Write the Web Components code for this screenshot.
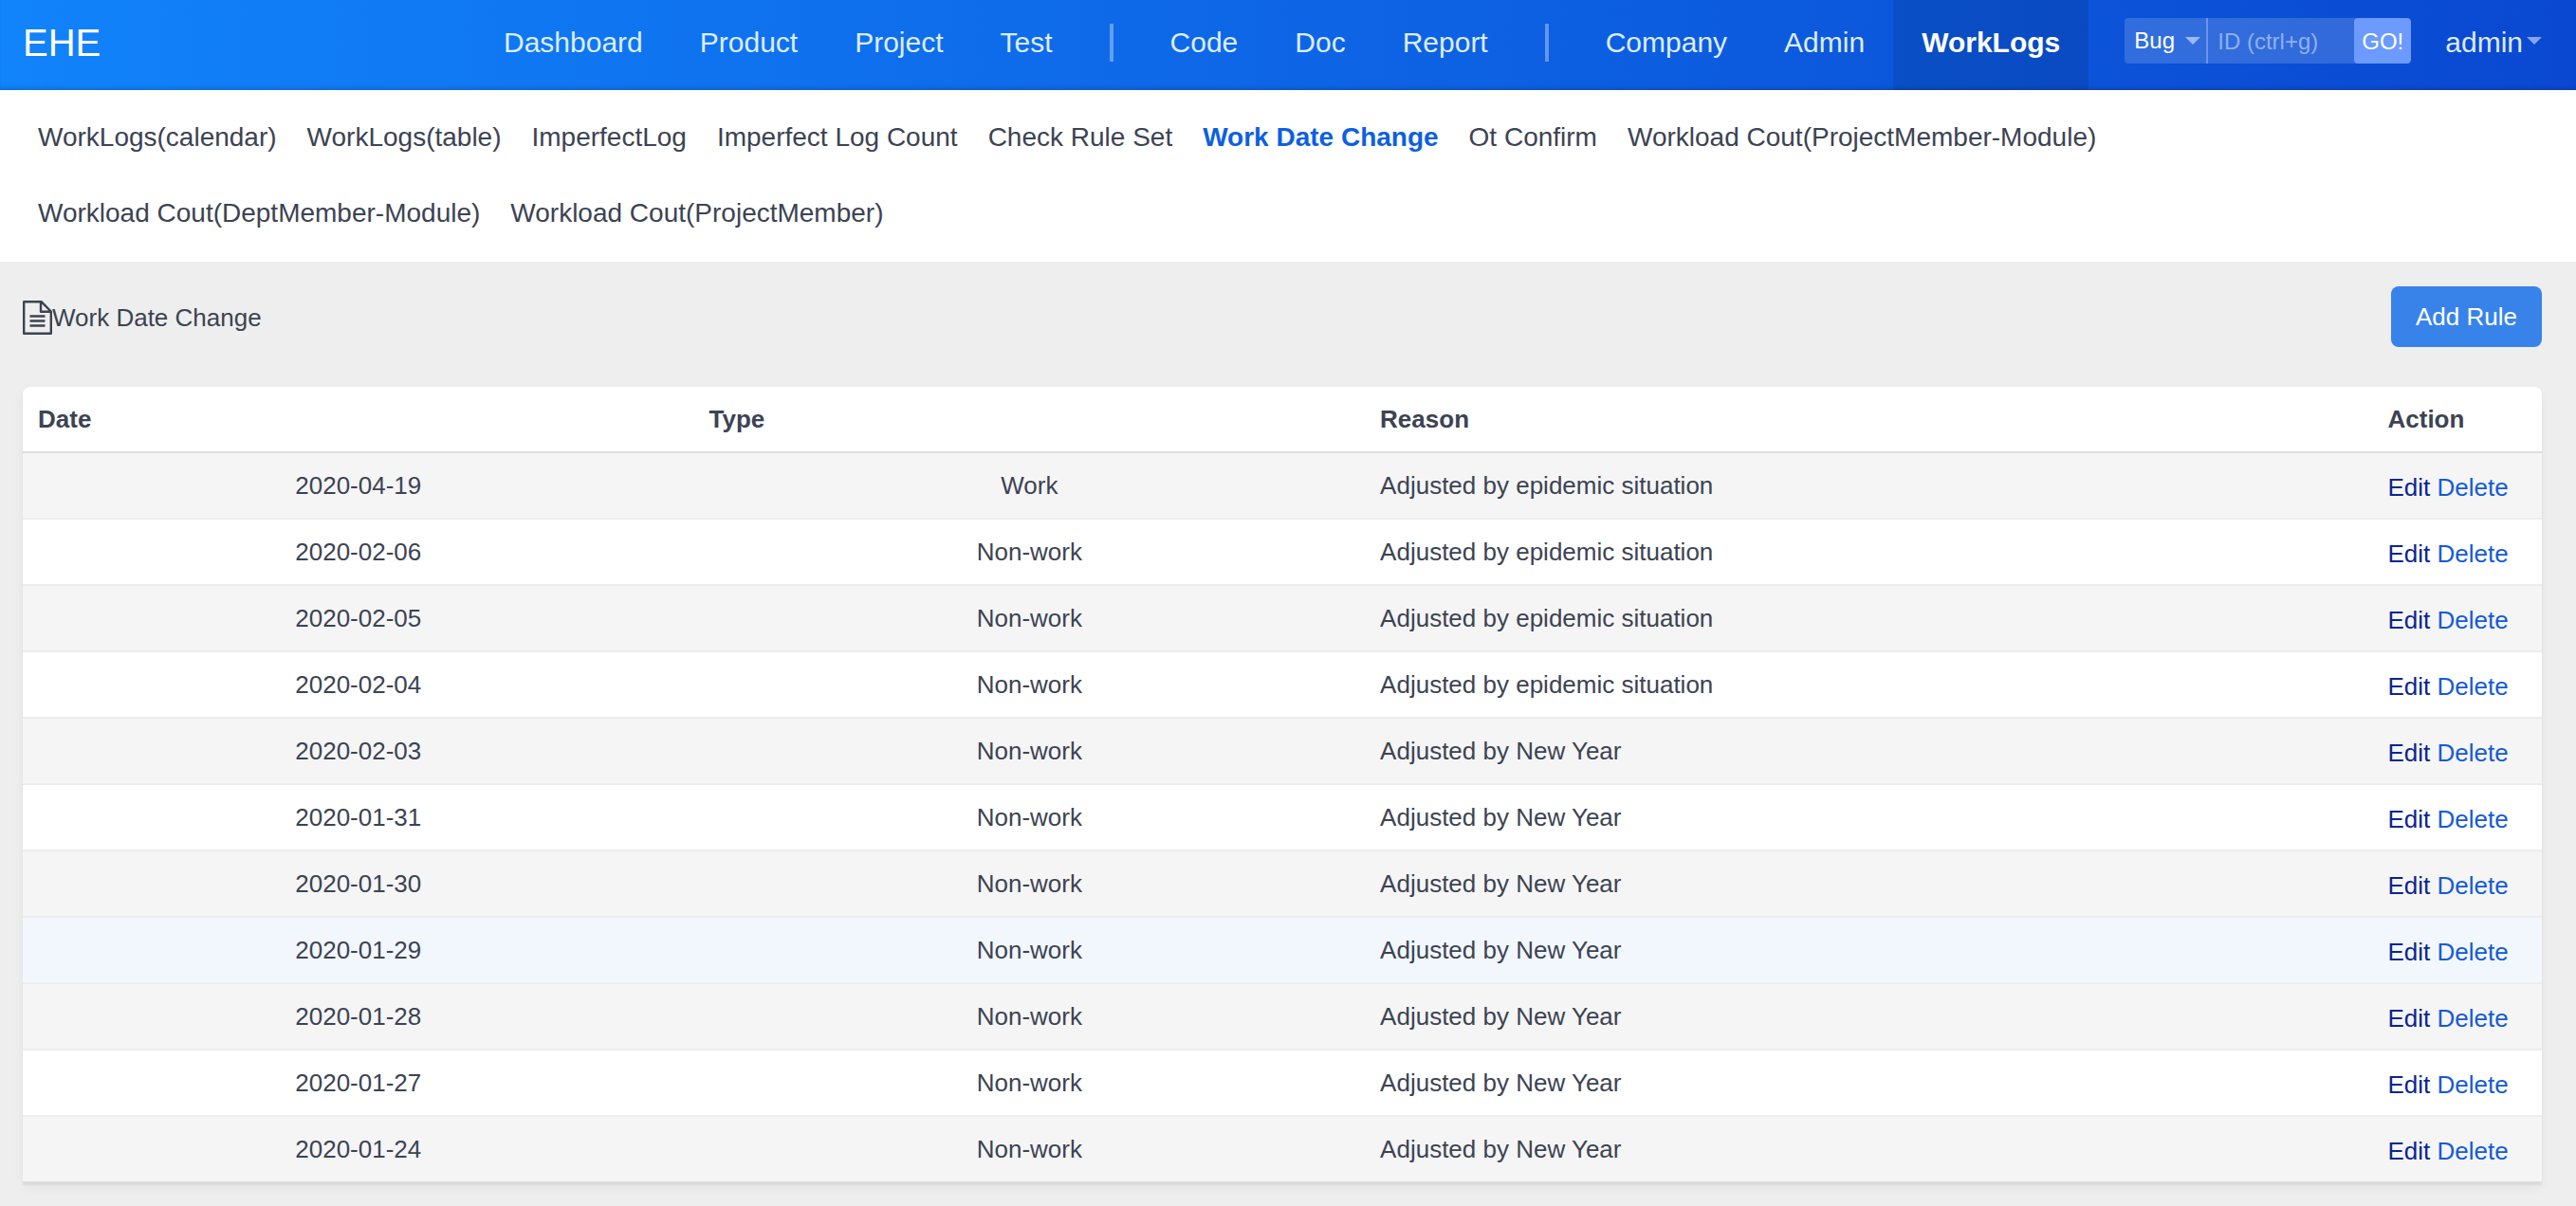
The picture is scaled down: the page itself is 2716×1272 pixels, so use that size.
<!DOCTYPE html>
<html lang="en">
<head>
<meta charset="utf-8">
<title>Work Date Change</title>
<style>
  body { margin: 0; background: #eee; color: #3c4353; font: 26px/36px "Liberation Sans", Arial, sans-serif; }
</style>
</head>
<body>
<work-logs-app></work-logs-app>

<template id="app-header">
  <style>
    :host { display: grid; grid-template-columns: 1fr auto 1fr; padding: 0 36px 0 24px; color: #fff;
      background: linear-gradient(90deg, #1183fb, #0a48d1); box-shadow: inset 0 -4px 4px -2px rgba(0,0,0,.16); }
    .brand { font-size: 40px; line-height: 90px; color: #fff; text-decoration: none; justify-self: start; }
    nav { display: flex; }
    .tools { display: flex; align-items: flex-start; gap: 36px; padding-left: 38px; }
    quick-search { margin-top: 19px; }
    .user { all: unset; display: flex; align-items: center; gap: 4px; font-size: 30px; line-height: 89px; color: #dfeaff; cursor: pointer; }
    .user svg { margin-bottom: 4px; }
  </style>
  <a class="brand" href="#">EHE</a>
  <nav aria-label="Main">
    <main-link>Dashboard</main-link>
    <main-link>Product</main-link>
    <main-link>Project</main-link>
    <main-link>Test</main-link>
    <nav-divider></nav-divider>
    <main-link>Code</main-link>
    <main-link>Doc</main-link>
    <main-link>Report</main-link>
    <nav-divider></nav-divider>
    <main-link>Company</main-link>
    <main-link>Admin</main-link>
    <main-link active>WorkLogs</main-link>
  </nav>
  <div class="tools">
    <quick-search></quick-search>
    <button class="user" type="button">admin<svg width="16" height="8" viewBox="0 0 16 8" aria-hidden="true"><path d="M0 0h16L8 8z" fill="#85a6ea"/></svg></button>
  </div>
</template>

<template id="main-link">
  <style>
    :host { display: block; }
    a { display: block; padding: 0 30px 6px; font-size: 30px; line-height: 89px; color: #dcedff; text-decoration: none; }
    :host([active]) a { background: rgba(0,0,0,.1); color: #fff; font-weight: bold; }
  </style>
  <a href="#"><slot></slot></a>
</template>

<template id="nav-divider">
  <style>
    :host { display: block; width: 4px; height: 40px; margin: 25px 30px 0; background: rgba(255,255,255,.35); }
  </style>
</template>

<template id="quick-search">
  <style>
    :host { display: block; }
    form { display: flex; height: 48px; border-radius: 4px; overflow: hidden; background: rgba(255,255,255,.16); }
    .kind { display: grid; width: 86px; align-items: center; border-right: 2px solid rgba(255,255,255,.28); }
    select, input, form button { font: 24px/44px "Liberation Sans", Arial, sans-serif; color: #fff; border: 0; margin: 0; outline: 0; }
    select { grid-area: 1/1; appearance: none; background: none; padding: 0 0 0 10px; height: 48px; }
    option { color: #3c4353; }
    .kind svg { grid-area: 1/1; justify-self: end; margin-right: 6px; pointer-events: none; }
    input { box-sizing: border-box; width: 154px; padding: 2px 10px 0; background: none; }
    input::placeholder { color: #8fb0f0; opacity: 1; }
    form button { width: 60px; padding: 2px 0 0; background: #6c9aff; border-radius: 4px; cursor: pointer; }
  </style>
  <form>
    <label class="kind">
      <select aria-label="Object type"><option>Bug</option></select>
      <svg width="16" height="8" viewBox="0 0 16 8" aria-hidden="true"><path d="M0 0h16L8 8z" fill="#9dbaf3"/></svg>
    </label>
    <input type="text" aria-label="ID" placeholder="ID (ctrl+g)">
    <button type="button">GO!</button>
  </form>
</template>

<template id="sub-nav">
  <style>
    :host { display: block; background: #fff; }
    nav { display: flex; flex-wrap: wrap; padding: 10px 24px 11px; }
  </style>
  <nav aria-label="WorkLogs"><slot></slot></nav>
</template>

<template id="sub-link">
  <style>
    :host { display: block; }
    a { display: block; padding: 0 16px; font-size: 28px; line-height: 80px; color: #3c4353; text-decoration: none; }
    :host([active]) a { color: #0c60e1; font-weight: bold; }
  </style>
  <a href="#"><slot></slot></a>
</template>

<template id="page-title">
  <style>
    :host { display: flex; align-items: center; justify-content: space-between; padding: 26px 0 42px; }
    .title { display: flex; align-items: center; padding-top: 2px; }
    button { height: 64px; padding: 0 26px; border: 0; border-radius: 8px; background: #3883ea; color: #fff;
      font: 26px/36px "Liberation Sans", Arial, sans-serif; cursor: pointer; }
  </style>
  <div class="title">
    <svg width="31" height="36" viewBox="0 0 31 36" fill="none" stroke="#3c4353" stroke-width="2.400" stroke-linejoin="round" aria-hidden="true">
      <path d="M1.200 1.200h18.300L29.800 11.500V34.800H1.200zM19 1.200v10.600h10.800M7.500 16.500h16M7.500 21.500h16M7.500 26.500h16"/>
    </svg><slot></slot>
  </div>
  <button type="button">Add Rule</button>
</template>

<template id="date-table">
  <style>
    :host { display: block; background: #fff; border-radius: 8px 8px 0 0;
      box-shadow: 0 2px 2px rgba(0,0,0,.05), 0 4px 12px rgba(0,0,0,.05); }
    table { width: 100%; table-layout: fixed; border-collapse: separate; border-spacing: 0; }
    .wide { width: 26.64%; }
    .reason { width: 40%; }
    th, td { padding: 16px; border-bottom: 2px solid #ededed; text-align: left; }
    th { border-color: #ddd; }
    tbody tr:nth-child(odd) { background: #f5f5f5; }
    tbody tr.hover, tbody tr:hover { background: #f2f7fe; }
    tbody tr:last-child td { border-color: #ddd; }
    td:nth-child(-n+2) { text-align: center; }
    td:last-child { padding: 18px 16px 14px; }
    a { color: #145ad8; text-decoration: none; }
    a.edit { color: #0a2590; }
  </style>
  <table>
    <colgroup><col class="wide"><col class="wide"><col class="reason"><col></colgroup>
    <thead><tr><th scope="col">Date</th><th scope="col">Type</th><th scope="col">Reason</th><th scope="col">Action</th></tr></thead>
    <tbody></tbody>
  </table>
</template>

<template id="work-logs-app">
  <style>
    :host { display: block; }
    main { padding: 0 36px 24px 24px; }
  </style>
  <app-header></app-header>
  <sub-nav>
    <sub-link>WorkLogs(calendar)</sub-link>
    <sub-link>WorkLogs(table)</sub-link>
    <sub-link>ImperfectLog</sub-link>
    <sub-link>Imperfect Log Count</sub-link>
    <sub-link>Check Rule Set</sub-link>
    <sub-link active>Work Date Change</sub-link>
    <sub-link>Ot Confirm</sub-link>
    <sub-link>Workload Cout(ProjectMember-Module)</sub-link>
    <sub-link>Workload Cout(DeptMember-Module)</sub-link>
    <sub-link>Workload Cout(ProjectMember)</sub-link>
  </sub-nav>
  <main>
    <page-title>Work Date Change</page-title>
    <date-table></date-table>
  </main>
</template>

<script>
  class TemplateElement extends HTMLElement {
    constructor() {
      super();
      const template = document.getElementById(this.localName);
      this.attachShadow({ mode: "open" }).append(template.content.cloneNode(true));
    }
  }

  const epidemic = "Adjusted by epidemic situation";
  const newYear = "Adjusted by New Year";
  const rules = [
    ["2020-04-19", "Work", epidemic],
    ["2020-02-06", "Non-work", epidemic],
    ["2020-02-05", "Non-work", epidemic],
    ["2020-02-04", "Non-work", epidemic],
    ["2020-02-03", "Non-work", newYear],
    ["2020-01-31", "Non-work", newYear],
    ["2020-01-30", "Non-work", newYear],
    ["2020-01-29", "Non-work", newYear, "hover"],
    ["2020-01-28", "Non-work", newYear],
    ["2020-01-27", "Non-work", newYear],
    ["2020-01-24", "Non-work", newYear],
  ];

  class DateTable extends TemplateElement {
    connectedCallback() {
      this.shadowRoot.querySelector("tbody").innerHTML = rules.map(([date, type, reason, state = ""]) =>
        `<tr class="${state}"><td>${date}</td><td>${type}</td><td>${reason}</td><td><a class="edit" href="#">Edit</a> <a href="#">Delete</a></td></tr>`
      ).join("");
    }
  }

  for (const name of ["main-link", "nav-divider", "quick-search", "app-header", "sub-link", "sub-nav", "page-title"]) {
    customElements.define(name, class extends TemplateElement {});
  }
  customElements.define("date-table", DateTable);
  customElements.define("work-logs-app", class extends TemplateElement {});
</script>
</body>
</html>
